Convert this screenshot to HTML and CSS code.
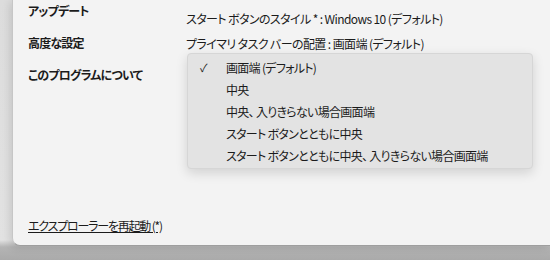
FILE: index.html
```html
<!DOCTYPE html>
<html lang="ja">
<head>
    <meta charset="UTF-8">
    <meta name="viewport" content="width=device-width, initial-scale=1.0">
    <title>設定</title>
    <link rel="stylesheet" href="styles.css">
</head>
<body>
    <div class="window">
        <div class="content">
            <div class="nav">
                <div class="nav-item">アップデート</div>
                <div class="nav-item">高度な設定</div>
                <div class="nav-item">このプログラムについて</div>
            </div>
            <div class="options">
                <div class="option">スタート ボタンのスタイル * : Windows 10 (デフォルト)</div>
                <div class="option">プライマリ タスク バーの配置 : 画面端 (デフォルト)</div>
            </div>
        </div>

        <!-- 配置のドロップダウン -->
        <div class="menu">
            <div class="menu-item"><span class="check">&#10003;</span>画面端 (デフォルト)</div>
            <div class="menu-item"><span class="check"></span>中央</div>
            <div class="menu-item"><span class="check"></span>中央、 入りきらない場合画面端</div>
            <div class="menu-item"><span class="check"></span>スタート ボタンとともに中央</div>
            <div class="menu-item"><span class="check"></span>スタート ボタンとともに中央、 入りきらない場合画面端</div>
        </div>

        <a class="restart" href="#">エクスプローラーを再起動 (*)</a>
    </div>
</body>
</html>
```

FILE: styles.css
```css
body {
    margin: 0;
    height: 260px;
    overflow: hidden;
    font-family: "Noto Sans CJK JP", "Noto Sans", sans-serif;
    font-size: 12px;
    font-feature-settings: "palt";
    letter-spacing: -0.6px;
    color: #1b1b1b;
    background: linear-gradient(to bottom, #dcdcdc 0, #e2e2e2 240px, #b4b4b4 247px, #aaaaaa 260px);
}
.window {
    position: relative;
    margin-left: 12px;
    height: 245px;
    display: flex;
    flex-direction: column;
    background-color: #f3f3f3;
    border-left: 1px solid #c6c6c6;
    border-bottom: 1px solid #9e9e9e;
    border-bottom-left-radius: 8px;
    box-shadow: -2px 2px 8px rgba(0, 0, 0, 0.12);
}
.content {
    display: flex;
    flex: 1;
}
.nav {
    width: 158px;
    padding-left: 15px;
    padding-top: 1px;
    display: flex;
    flex-direction: column;
    gap: 12px;
}
.nav-item {
    line-height: 20px;
    font-weight: bold;
    letter-spacing: -0.8px;
}
.options {
    padding-top: 6px;
}
.option {
    line-height: 25px;
}
.menu {
    position: absolute;
    left: 174px;
    top: 53px;
    width: 344px;
    padding: 2px 0;
    background-color: #e3e3e3;
    border: 1px solid #d6d6d6;
    border-radius: 4px;
    box-shadow: 0 4px 12px rgba(0, 0, 0, 0.14);
}
.menu-item {
    display: flex;
    align-items: center;
    height: 22px;
    white-space: pre;
    letter-spacing: -0.7px;
}
.check {
    width: 38px;
    padding-left: 12px;
    box-sizing: border-box;
    font-size: 11px;
}
.restart {
    margin-left: 15px;
    margin-bottom: 9px;
    align-self: flex-start;
    line-height: 20px;
    letter-spacing: -1.2px;
    color: #1b1b1b;
}
```
